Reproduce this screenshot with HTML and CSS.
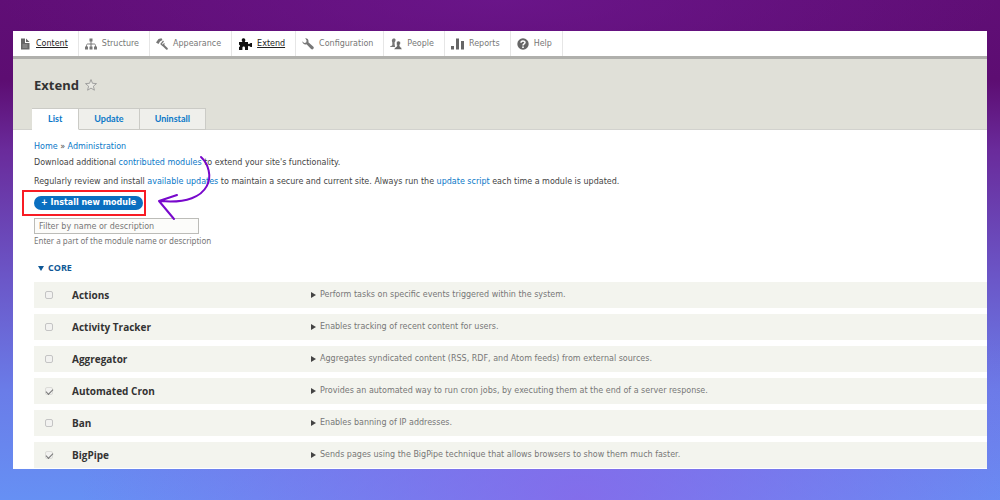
FILE: index.html
```html
<!DOCTYPE html>
<html lang="en">
<head>
<meta charset="utf-8">
<title>Extend</title>
<link rel="stylesheet" href="styles.css">
</head>
<body>
<div class="window">
  <nav class="toolbar" aria-label="Administration menu">
    <a class="tool current" href="#"><svg class="icon" viewBox="0 0 12 12"><path fill="#666" d="M2 .5h4v4.500h4.500v6.500H2z"/><path fill="#666" d="M7 .5L10.500 4H7z"/><path stroke="#bbb" stroke-width=".7" d="M3.500 7h5M3.500 9h5"/></svg>Content</a>
    <a class="tool" href="#"><svg class="icon" viewBox="0 0 12 12"><path fill="#777" d="M4.500.5h3v3h-3zM0 8.500h3v3H0zM4.500 8.500h3v3h-3zM9 8.500h3v3H9z"/><path fill="none" stroke="#777" d="M6 3v6M1.500 9V7.500C1.500 6 2.500 6 3.500 6h5c1 0 2 0 2 1.500V9"/></svg>Structure</a>
    <a class="tool" href="#"><svg class="icon" viewBox="0 0 12 12"><path fill="#777" d="M0 4.500L2.500 1l3-.8L6.500 2 4 3.500 2.500 6z"/><path fill="none" stroke="#777" stroke-width="1.200" d="M7.500 3L5 6l1.500 1.500 2-2"/><path stroke="#777" stroke-width="2" stroke-linecap="round" d="M7.500 7.500L10.800 10.800"/></svg>Appearance</a>
    <a class="tool current" href="#"><svg class="icon dark" viewBox="0 0 14 12"><path fill="#111" d="M1 4h3.500C3 2 4 .3 5.500.3S8 2 6.800 4H10v2.200c1-.9 1.600-.4 2.200-.4V5H14v4h-1.800v-.8c-.6.200-1.200.3-2.200-.4V12H7V9.800c0-1.700-2.600-1.700-2.600 0V12H1V9c1.300 0 1.300-2.300 0-2.300z"/></svg>Extend</a>
    <a class="tool" href="#"><svg class="icon" viewBox="0 0 12 12"><path fill="#777" d="M3.200.3C5.500 0 7 2 6.400 4.200l5 4.600c1.300 1.500-.8 3.500-2.300 2.200L4.500 6.300C2.400 7 .2 5.500.3 3.200L2.200 5l2-.6.400-1.900z"/></svg>Configuration</a>
    <a class="tool" href="#"><svg class="icon" viewBox="0 0 13 13"><path fill="#777" d="M3 .8C4.500 0 6.400.6 6 2.500 6 4 5 4.200 5 5v1.500l.5 3.300H0c0-1.600 2.500-1.200 2.500-2.300V5C2 3.500 1.500 2 3 .8z"/><path fill="#666" stroke="#fff" stroke-width=".6" d="M8 3.600c2-.9 3.700.4 3.300 2.200-.1 1-.8 1.500-.8 2.200 0 2.500 2.500 1.500 2.500 4.500H4.500c0-3 3-2 3-4.500C7 6.500 6.500 4.500 8 3.600z"/></svg>People</a>
    <a class="tool" href="#"><svg class="icon wide" viewBox="0 0 13 12"><path fill="#666" d="M0 8h3v3.500H0zM5 .5h3v11H5zM10 3h3v8.500h-3z"/></svg>Reports</a>
    <a class="tool" href="#"><svg class="icon" viewBox="0 0 12 12"><circle cx="6" cy="6" r="5.700" fill="#666"/><path fill="none" stroke="#fff" stroke-width="1.500" d="M4 4.700C4 2.500 8 2.500 8 4.500 8 6 6 5.700 6 7.400"/><circle cx="6" cy="9.200" r=".9" fill="#fff"/></svg>Help</a>
  </nav>
  <header class="header">
    <div class="title-row">
      <h1 class="title">Extend</h1>
      <button class="star" type="button" aria-label="Add to shortcuts"><svg class="star-icon" viewBox="0 0 12 12"><path fill="#e8e8e2" stroke="#999" stroke-width=".9" stroke-linejoin="round" d="M6 .6l1.500 3.700 4 .3-3.100 2.600 1 4L6 9.100 2.600 11.200l1-4L.5 4.600l4-.3z"/></svg></button>
    </div>
    <nav class="tabs" aria-label="Tabs">
      <a class="tab active" href="#">List</a>
      <a class="tab" href="#">Update</a>
      <a class="tab" href="#">Uninstall</a>
    </nav>
  </header>
  <main class="content">
    <nav class="breadcrumb" aria-label="Breadcrumb"><a href="#">Home</a> » <a href="#">Administration</a></nav>
    <p class="intro">Download additional <a href="#">contributed modules</a> to extend your site's functionality.</p>
    <p class="intro">Regularly review and install <a href="#">available updates</a> to maintain a secure and current site. Always run the <a href="#">update script</a> each time a module is updated.</p>
    <div class="action">
      <button class="install" type="button">+ Install new module</button>
      <span class="highlight"></span>
      <svg class="arrow" viewBox="0 0 58 66"><path d="M45 3C60 17 59 52 4 47M21 41L3 47L18 65" fill="none" stroke="#7808cc" stroke-width="2" stroke-linecap="round" stroke-linejoin="round"/></svg>
    </div>
    <div class="filter">
      <input class="filter-input" id="filter" type="text" placeholder="Filter by name or description">
      <label class="filter-help" for="filter">Enter a part of the module name or description</label>
    </div>
    <details class="group" open>
      <summary class="group-title">CORE</summary>
      <table class="modules">
        <tr><td class="check"><input type="checkbox" id="m1"></td><th scope="row" class="name"><label for="m1">Actions</label></th><td class="info"><details><summary>Perform tasks on specific events triggered within the system.</summary></details></td></tr>
        <tr><td class="check"><input type="checkbox" id="m2"></td><th scope="row" class="name"><label for="m2">Activity Tracker</label></th><td class="info"><details><summary>Enables tracking of recent content for users.</summary></details></td></tr>
        <tr><td class="check"><input type="checkbox" id="m3"></td><th scope="row" class="name"><label for="m3">Aggregator</label></th><td class="info"><details><summary>Aggregates syndicated content (RSS, RDF, and Atom feeds) from external sources.</summary></details></td></tr>
        <tr><td class="check"><input type="checkbox" id="m4" checked disabled></td><th scope="row" class="name"><label for="m4">Automated Cron</label></th><td class="info"><details><summary>Provides an automated way to run cron jobs, by executing them at the end of a server response.</summary></details></td></tr>
        <tr><td class="check"><input type="checkbox" id="m5"></td><th scope="row" class="name"><label for="m5">Ban</label></th><td class="info"><details><summary>Enables banning of IP addresses.</summary></details></td></tr>
        <tr><td class="check"><input type="checkbox" id="m6" checked disabled></td><th scope="row" class="name"><label for="m6">BigPipe</label></th><td class="info"><details><summary>Sends pages using the BigPipe technique that allows browsers to show them much faster.</summary></details></td></tr>
      </table>
    </details>
  </main>
</div>
</body>
</html>
```
FILE: styles.css
```css
* { box-sizing: border-box; }

body {
  margin: 0;
  height: 100vh;
  padding: 31px 13px;
  display: flex;
  background:
    radial-gradient(ellipse 50% 60% at 58% 100%, rgba(140, 98, 232, 0.75), rgba(140, 98, 232, 0)),
    radial-gradient(ellipse 50% 20% at 50% 0, rgba(110, 24, 145, 0.7), rgba(110, 24, 145, 0)),
    linear-gradient(#600e76, #5d0d72 16%, #6a2b9b 30%, #6b57c8 56%, #6a7ce8 78%, #6690f4);
  font: 8px/14px "DejaVu Sans", sans-serif;
  color: #444;
}

a { color: #0a78c8; text-decoration: none; }

.window {
  flex: 1;
  min-width: 0;
  overflow: hidden;
  background: #fff;
}

.toolbar {
  display: flex;
  height: 28px;
  border-bottom: 3px solid #b0b0ac;
}

.tool {
  display: flex;
  align-items: center;
  gap: 5px;
  padding: 1px 10px 0 6px;
  border-right: 1px solid #e6e6e6;
  color: #777;
}

.tool.current {
  color: #222;
  text-decoration: underline;
}

.icon { width: 12px; height: 12px; }
.icon.wide { width: 13px; }
.icon.dark { width: 14px; }

.header {
  padding: 18px 19px 0;
  background: #e0e0d8;
  border-bottom: 1px solid #d2d2ce;
}

.title-row {
  display: flex;
  align-items: center;
  gap: 6px;
  padding-left: 2px;
}

.title {
  margin: 0;
  font: bold 13px/16px "Noto Sans", sans-serif;
  color: #333;
}

.star {
  display: flex;
  padding: 0;
  border: 0;
  background: none;
}

.star-icon { width: 12px; height: 12px; }

.tabs {
  display: flex;
  margin: 15px 0 -1px;
}

.tab {
  padding: 3px 15px;
  border: 1px solid #cbcbc6;
  border-left: 0;
  background: #efefeb;
  font: bold 9px/14px Lato, sans-serif;
}

.tab.active {
  padding: 3px 16px;
  background: #fff;
  border-bottom-color: #fff;
}

.content { padding: 10px 0 0 21px; }

.intro { margin: 2px 0 5px; }

.action {
  position: relative;
  display: flex;
  margin-top: 7px;
}

.install {
  height: 14px;
  padding: 0 7px;
  border: 0;
  border-radius: 7px;
  background: #0a6fc0;
  color: #fff;
  font: bold 8px/14px "DejaVu Sans", sans-serif;
}

.highlight {
  position: absolute;
  left: -12px;
  top: -6px;
  width: 124px;
  height: 26px;
  border: 2px solid #f81c24;
}

.arrow {
  position: absolute;
  left: 122px;
  top: -42px;
  width: 58px;
  height: 66px;
  overflow: visible;
}

.filter {
  display: flex;
  flex-direction: column;
  align-items: flex-start;
  margin-top: 8px;
}

.filter-input {
  width: 165px;
  height: 16px;
  padding: 0 4px;
  border: 1px solid #bcbcb8;
  background: #fcfcfa;
  font: 8px/14px "DejaVu Sans", sans-serif;
}

.filter-input::placeholder { color: #777; }

.filter-help {
  color: #777;
  font: 8px/14px "Noto Sans", sans-serif;
}

.group { margin-top: 13px; }

.group-title,
.info summary {
  display: flex;
  align-items: center;
  gap: 4px;
}

.group-title {
  padding-left: 4px;
  color: #0f5896;
  font: bold 9px/14px "Open Sans", sans-serif;
}

.group-title::before,
.info summary::before {
  content: "";
  border: 3px solid transparent;
}

.group-title::before {
  border-top: 5px solid #0f5896;
  border-bottom: 0;
}

.info summary::before {
  border-left: 5px solid #444;
  border-right: 0;
}

.modules {
  width: 100%;
  margin-top: 1px;
  border-spacing: 0 6px;
}

.modules tr { background: #f3f4ee; }

.check, .name, .info {
  height: 26px;
  padding: 0;
}

.check {
  width: 38px;
  padding-left: 11px;
}

.check input {
  appearance: none;
  display: grid;
  place-items: center;
  width: 8px;
  height: 8px;
  margin: 0;
  border: 1px solid #c4c4c4;
  border-radius: 2px;
  background: #f2f2f0;
}

.check input:disabled { border-color: #dcdcd8; }

.check input:checked::before {
  content: "";
  width: 6px;
  height: 3px;
  border-left: 1px solid #777;
  border-bottom: 1px solid #777;
  transform: rotate(-45deg);
}

.name {
  width: 239px;
  text-align: left;
  font: bold 10px/14px "Open Sans", sans-serif;
  color: #333;
}

.info { color: #777; }
```
